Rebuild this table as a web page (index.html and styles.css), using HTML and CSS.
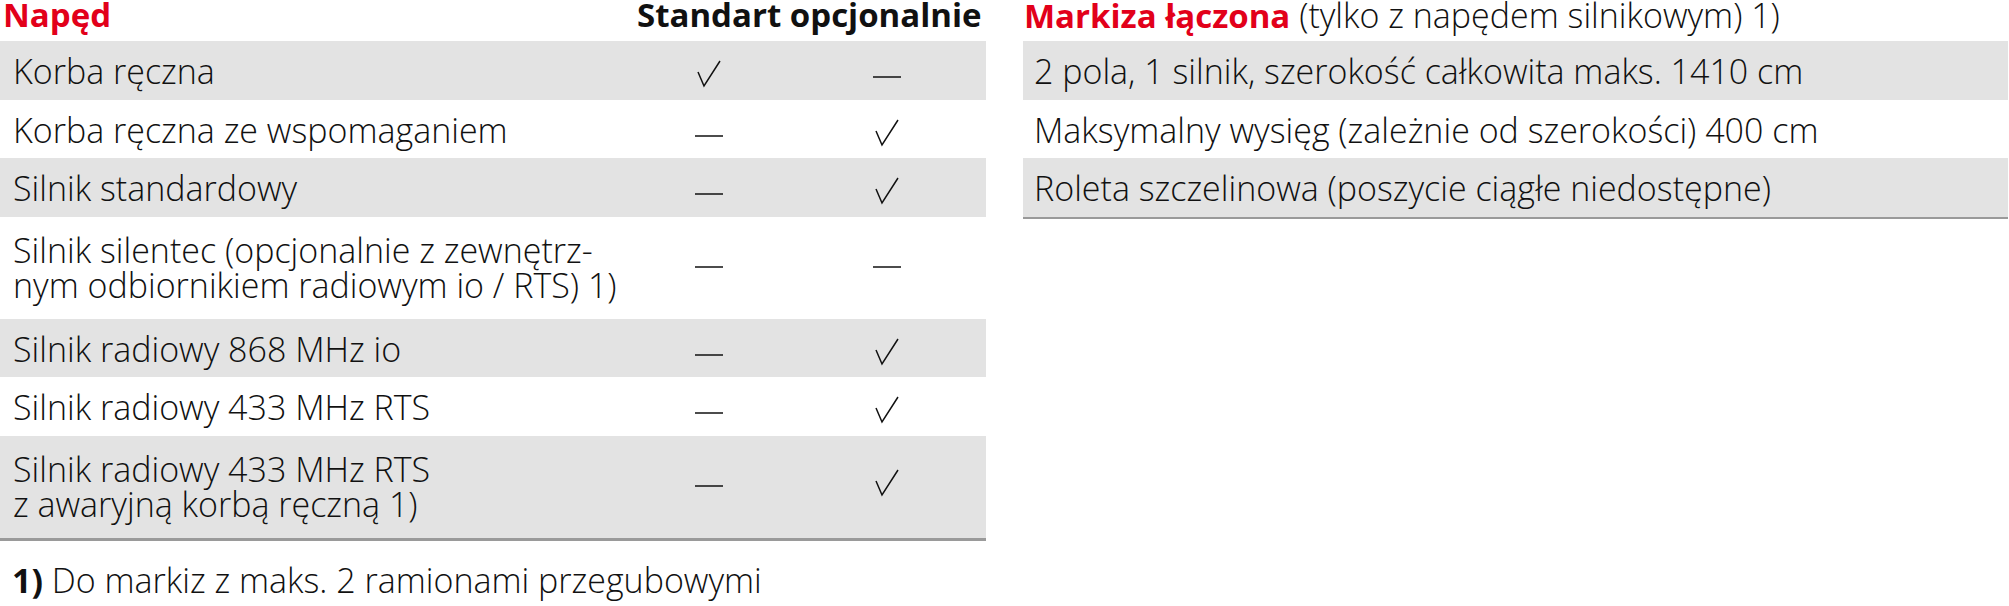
FILE: index.html
```html
<!DOCTYPE html>
<html lang="pl">
<head>
<meta charset="utf-8">
<title>Napęd</title>
<link rel="stylesheet" href="styles.css">
</head>
<body>
<div class="page">
  <section class="left">
    <div class="head">
      <div class="h-title">Napęd</div>
      <div class="h-cols">Standart opcjonalnie</div>
    </div>
    <div class="rows">
      <div class="row grey">
        <div class="label">Korba ręczna</div>
        <div class="mark c2"><svg viewBox="0 0 30 30"><path class="chk" d="M4 14 L10 28 L26 3"/></svg></div>
        <div class="mark c3"><svg viewBox="0 0 30 30"><path class="dsh" d="M1 19 H29"/></svg></div>
      </div>
      <div class="row">
        <div class="label">Korba ręczna ze wspomaganiem</div>
        <div class="mark c2"><svg viewBox="0 0 30 30"><path class="dsh" d="M1 19 H29"/></svg></div>
        <div class="mark c3"><svg viewBox="0 0 30 30"><path class="chk" d="M4 14 L10 28 L26 3"/></svg></div>
      </div>
      <div class="row grey">
        <div class="label">Silnik standardowy</div>
        <div class="mark c2"><svg viewBox="0 0 30 30"><path class="dsh" d="M1 19 H29"/></svg></div>
        <div class="mark c3"><svg viewBox="0 0 30 30"><path class="chk" d="M4 14 L10 28 L26 3"/></svg></div>
      </div>
      <div class="row tall">
        <div class="label"><span class="ln">Silnik silentec (opcjonalnie z zewnętrz-</span><span class="ln">nym odbiornikiem radiowym io / RTS) 1)</span></div>
        <div class="mark c2"><svg viewBox="0 0 30 30"><path class="dsh" d="M1 19 H29"/></svg></div>
        <div class="mark c3"><svg viewBox="0 0 30 30"><path class="dsh" d="M1 19 H29"/></svg></div>
      </div>
      <div class="row grey">
        <div class="label">Silnik radiowy 868 MHz io</div>
        <div class="mark c2"><svg viewBox="0 0 30 30"><path class="dsh" d="M1 19 H29"/></svg></div>
        <div class="mark c3"><svg viewBox="0 0 30 30"><path class="chk" d="M4 14 L10 28 L26 3"/></svg></div>
      </div>
      <div class="row">
        <div class="label">Silnik radiowy 433 MHz RTS</div>
        <div class="mark c2"><svg viewBox="0 0 30 30"><path class="dsh" d="M1 19 H29"/></svg></div>
        <div class="mark c3"><svg viewBox="0 0 30 30"><path class="chk" d="M4 14 L10 28 L26 3"/></svg></div>
      </div>
      <div class="row grey tall">
        <div class="label"><span class="ln">Silnik radiowy 433 MHz RTS</span><span class="ln">z awaryjną korbą ręczną 1)</span></div>
        <div class="mark c2"><svg viewBox="0 0 30 30"><path class="dsh" d="M1 19 H29"/></svg></div>
        <div class="mark c3"><svg viewBox="0 0 30 30"><path class="chk" d="M4 14 L10 28 L26 3"/></svg></div>
      </div>
    </div>
    <p class="note"><b>1)</b> Do markiz z maks. 2 ramionami przegubowymi</p>
  </section>
  <section class="right">
    <div class="r-head"><span class="red">Markiza łączona</span> (tylko z napędem silnikowym) 1)</div>
    <div class="r-rows">
      <div class="r-row grey">2 pola, 1 silnik, szerokość całkowita maks. 1410 cm</div>
      <div class="r-row">Maksymalny wysięg (zależnie od szerokości) 400 cm</div>
      <div class="r-row grey">Roleta szczelinowa (poszycie ciągłe niedostępne)</div>
    </div>
  </section>
</div>
</body>
</html>
```
FILE: styles.css
```css
html, body {
  margin: 0;
  padding: 0;
  background: #fff;
}
body {
  font-family: "Open Sans", "Noto Sans", sans-serif;
  font-weight: 300;
  font-size: 34px;
  color: #111;
  width: 2009px;
  height: 606px;
  overflow: hidden;
}
.page {
  display: flex;
  gap: 37px;
}
.left {
  width: 986px;
  flex: none;
}
.right {
  width: 985px;
  flex: none;
}
.head {
  display: grid;
  grid-template-columns: 637px 349px;
  height: 41px;
  line-height: 30px;
  font-weight: 700;
  font-size: 33px;
}
.h-title {
  color: #e2001a;
  padding-left: 3px;
}
.h-cols {
  white-space: nowrap;
  color: #111;
}
.rows {
  border-bottom: 3px solid #9a9a9a;
}
.row {
  display: grid;
  grid-template-columns: 637px 144px 205px;
  height: 58.5px;
  align-items: center;
  line-height: 35px;
}
.row.tall {
  height: 102px;
}
.grey {
  background: #e3e3e3;
}
.label {
  padding-left: 13px;
  padding-top: 3px;
  white-space: nowrap;
}
.ln {
  display: block;
  height: 35px;
}
.tall .label {
  padding-top: 0;
}
.mark {
  display: flex;
  justify-content: center;
  align-items: center;
  height: 100%;
}
.mark.c3 {
  padding-left: 7px;
}
.mark svg {
  width: 30px;
  height: 30px;
  margin-top: 6px;
  overflow: visible;
}
.tall .mark svg {
  margin-top: 0;
  margin-bottom: 10px;
}
.chk, .dsh {
  fill: none;
  stroke: #111;
  stroke-width: 1.5;
  stroke-linecap: butt;
  stroke-linejoin: miter;
}
.note {
  margin: 22px 0 0 0;
  padding-left: 12px;
  line-height: 35px;
  white-space: nowrap;
}
.note b {
  font-weight: 700;
}
.r-head {
  height: 41px;
  line-height: 30px;
  padding-left: 1px;
  white-space: nowrap;
}
.red {
  color: #e2001a;
  font-weight: 700;
  font-size: 33px;
}
.r-rows {
  border-bottom: 2px solid #9a9a9a;
}
.r-row {
  height: 58.5px;
  display: flex;
  align-items: center;
  padding-left: 11px;
  padding-top: 3px;
  box-sizing: border-box;
  line-height: 35px;
  white-space: nowrap;
}
```
